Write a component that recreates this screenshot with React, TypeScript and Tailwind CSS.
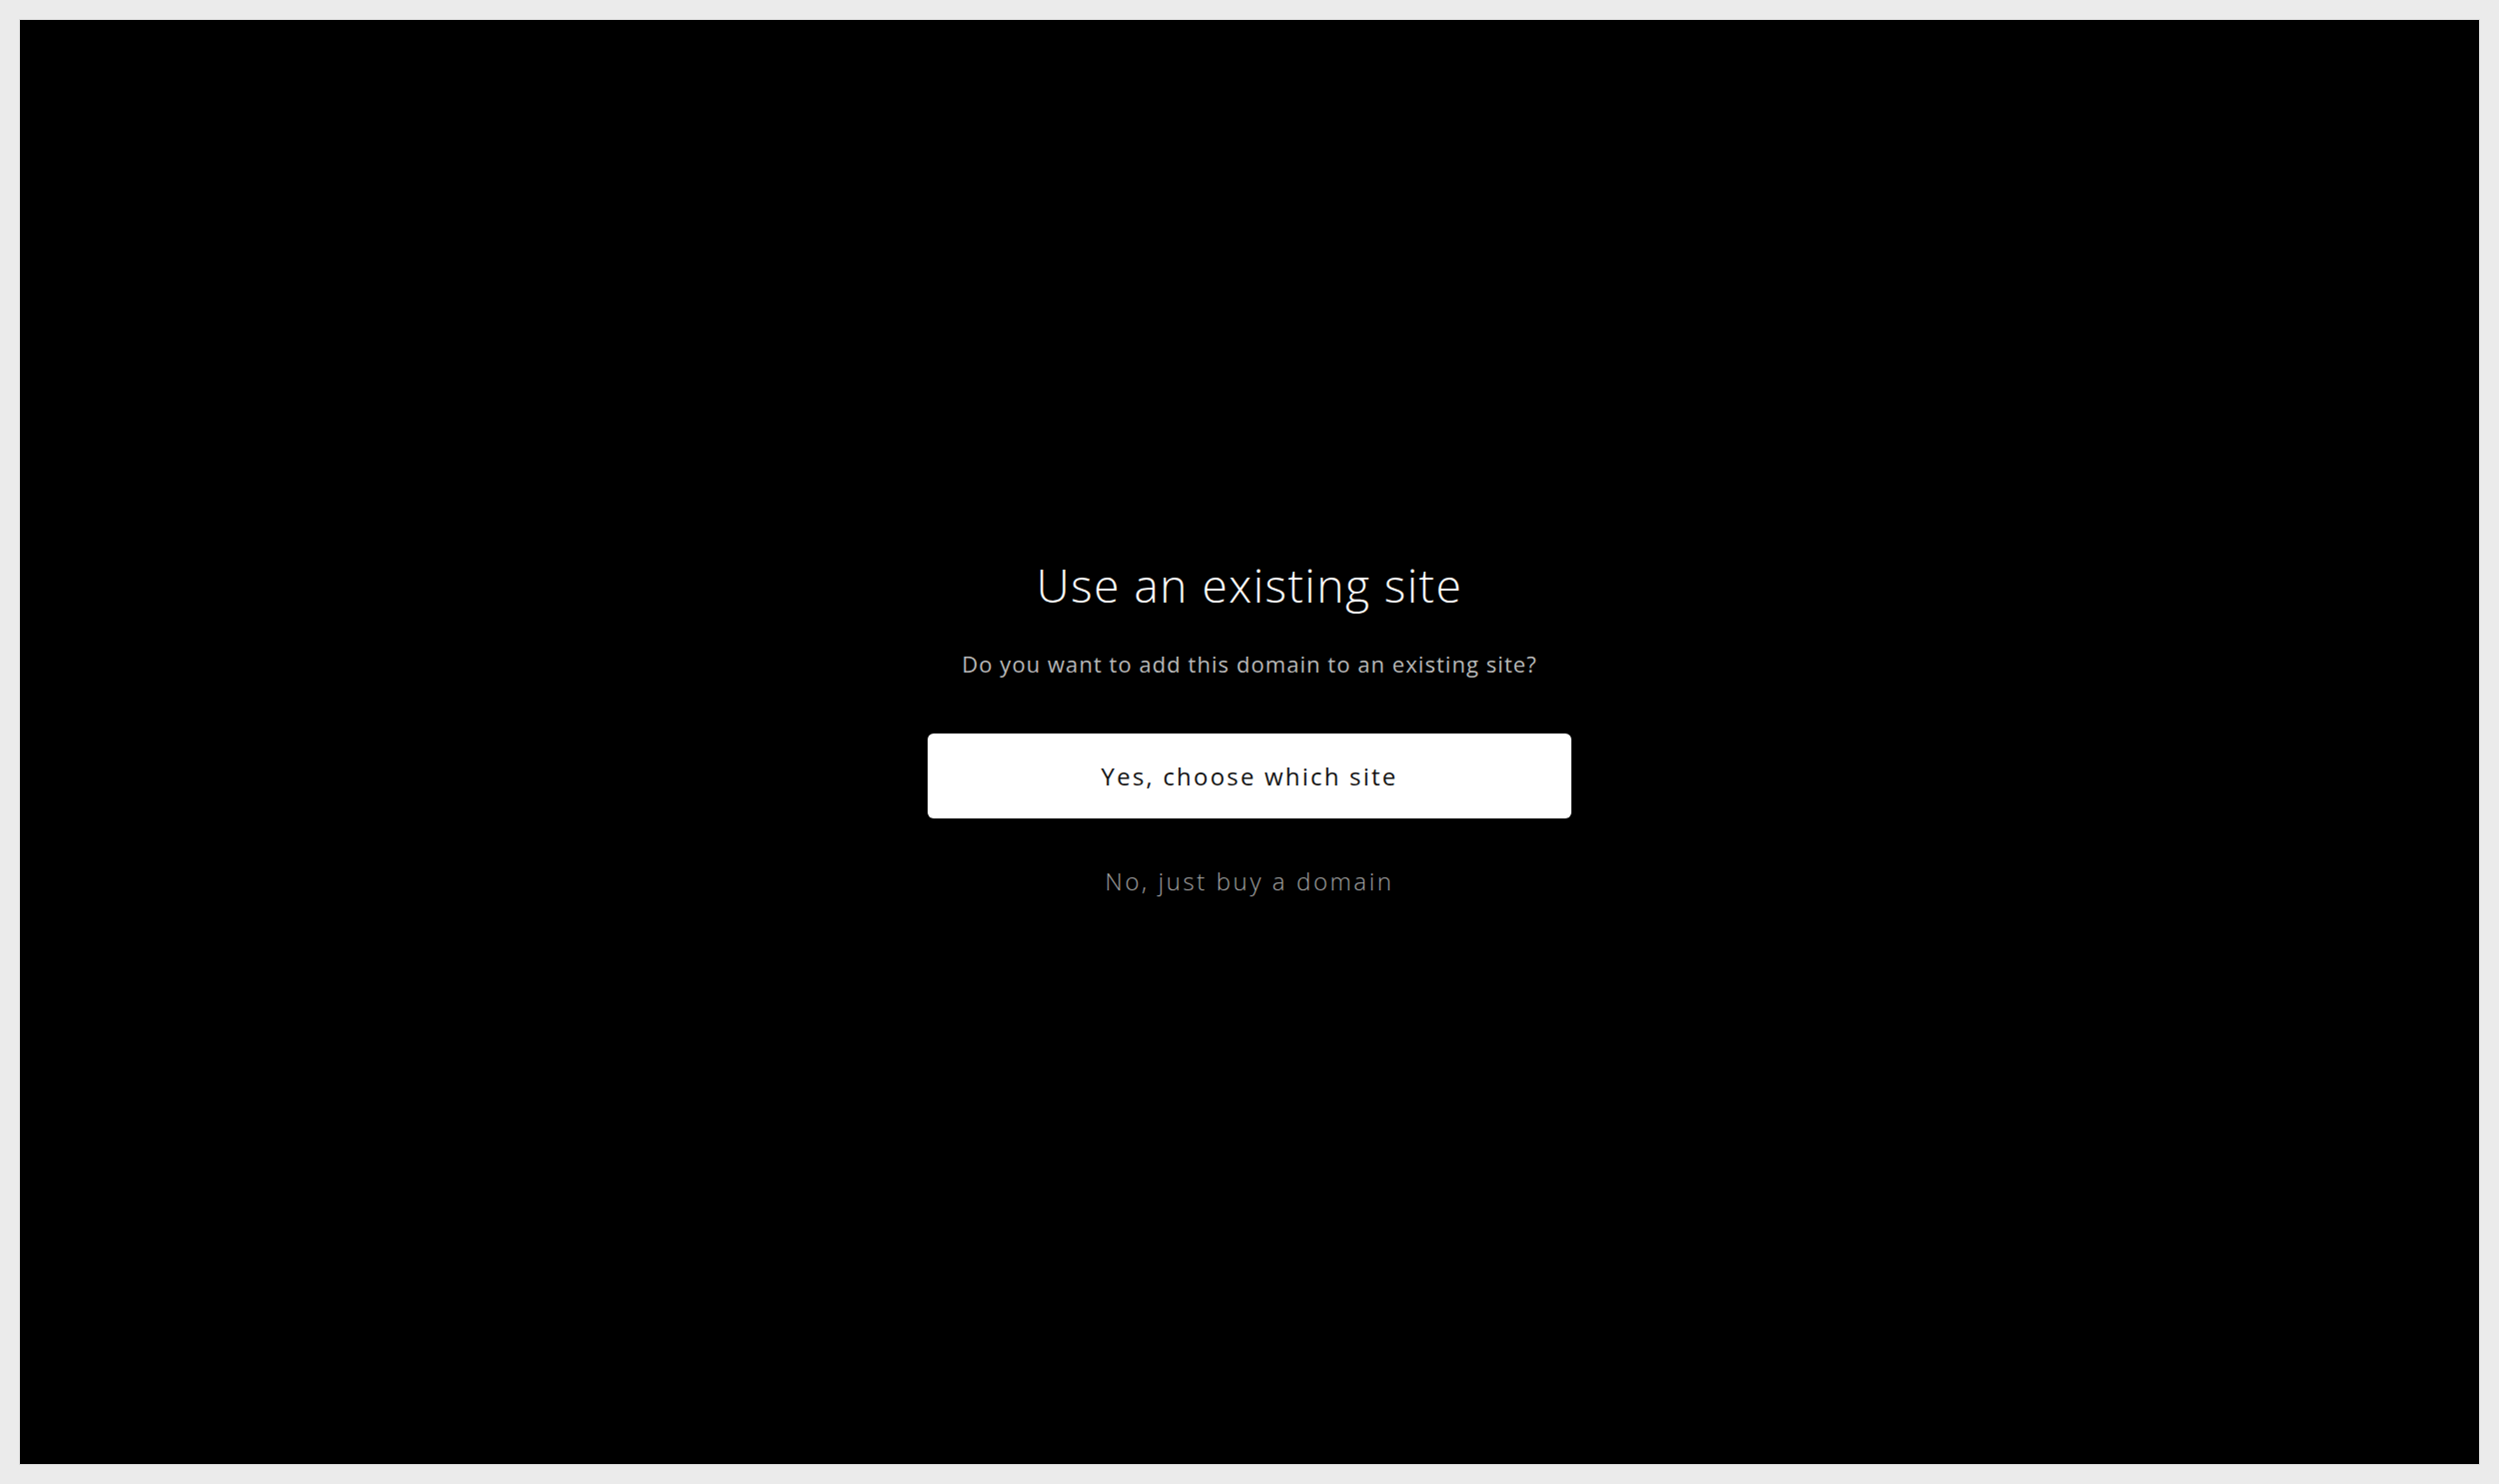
export default function App() {
  return (
    <div className="h-screen w-full bg-[#ebebeb] p-[19px] flex" style={{ fontFamily: "'Open Sans', Lato, sans-serif" }}>
      <div className="flex-1 bg-black border border-[#d9d9d9] flex flex-col items-center justify-center pb-[29px]">
        <h1 className="text-[46px] leading-none font-light text-white tracking-[1.5px]">Use an existing site</h1>
        <p className="mt-[45px] text-[22px] leading-none text-[#b8b8b8] tracking-[1.05px]">
          Do you want to add this domain to an existing site?
        </p>
        <button className="mt-[59px] w-[644px] h-[85px] bg-white rounded-[6px] text-[24px] leading-none text-[#141414] tracking-[2.2px]">
          Yes, choose which site
        </button>
        <button className="mt-[51px] text-[24px] leading-none font-light text-[#a0a0a0] tracking-[2.6px]">
          No, just buy a domain
        </button>
      </div>
    </div>
  );
}
